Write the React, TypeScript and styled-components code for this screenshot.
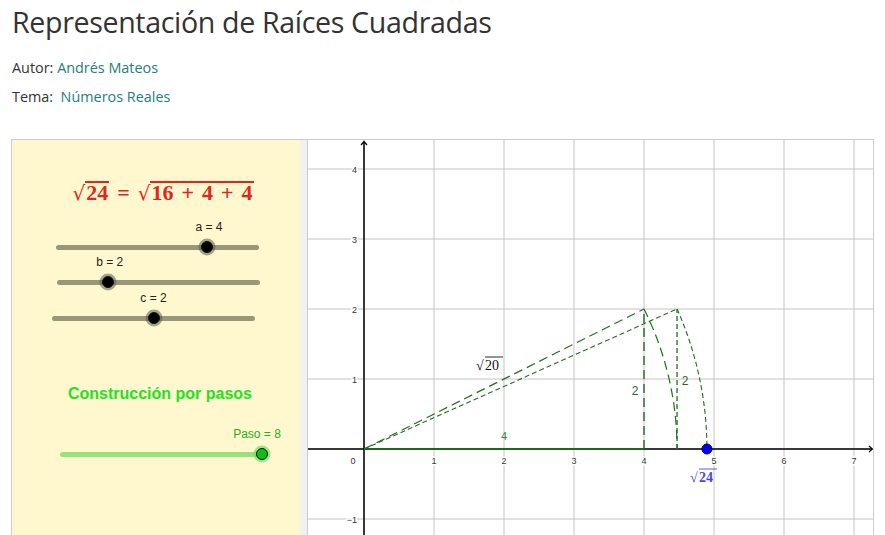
import React from "react"
import styled, { createGlobalStyle } from "styled-components"

const GlobalStyle = createGlobalStyle`
  body {
    margin: 0;
    background: #ffffff;
    font-family: "Open Sans", "Liberation Sans", sans-serif;
    color: #333333;
  }
`

const Page = styled.div`
  padding-left: 11px;
  width: 874px;
  height: 535px;
  overflow: hidden;
`

const Title = styled.h1`
  margin: 0 0 0 1px;
  font-family: "Open Sans", sans-serif;
  font-weight: 400;
  font-size: 28.6px;
  line-height: 44px;
  color: #333333;
  letter-spacing: -0.35px;
`

const MetaRow = styled.div<{ $gap: number }>`
  margin: ${(p) => p.$gap}px 0 0 1px;
  font-size: 14.4px;
  line-height: 20px;
  color: #333333;
`

const MetaLink = styled.a`
  color: #267d7d;
  text-decoration: none;
`

const Frame = styled.div`
  display: flex;
  margin-top: 32px;
  width: 861px;
  height: 400px;
  border: 1px solid #cccccc;
`

const LeftPanel = styled.div`
  width: 288px;
  background: #fff8cf;
  display: flex;
  flex-direction: column;
  font-family: "Liberation Sans", Arial, sans-serif;
`

const Separator = styled.div`
  width: 7px;
  background: #f1f1f1;
  border-right: 1px solid #cccccc;
`

const GraphView = styled.div`
  width: 565px;
  background: #ffffff;
`

const Formula = styled.div`
  margin-top: 41px;
  padding-left: 14px;
  text-align: center;
  height: 24px;
  font-family: "Liberation Serif", "Times New Roman", serif;
  font-weight: bold;
  font-size: 22px;
  line-height: 24px;
  color: #e0271f;
  white-space: nowrap;
`

const Radical = styled.span`
  font-family: "DejaVu Serif", serif;
  font-weight: normal;
  font-size: 20px;
`

const Radicand = styled.span`
  display: inline-block;
  border-top: 2px solid #e0271f;
  line-height: 20px;
  padding: 0 1px;
`

const Op = styled.span<{ $space: number }>`
  margin: 0 ${(p) => p.$space}px;
`

const SliderRow = styled.div<{ $left: number; $width: number; $top: number }>`
  position: relative;
  margin: ${(p) => p.$top}px 0 0 ${(p) => p.$left}px;
  width: ${(p) => p.$width}px;
  height: 35px;
`

const SliderLabel = styled.div<{ $color: string }>`
  position: absolute;
  top: 0;
  transform: translateX(-50%);
  font-size: 12px;
  line-height: 14px;
  color: ${(p) => p.$color};
  white-space: nowrap;
`

const TrackWrap = styled.div`
  position: relative;
  margin-top: 19px;
  height: 16px;
  display: flex;
  align-items: center;
`

const Track = styled.div<{ $color: string }>`
  width: 100%;
  height: 5px;
  border-radius: 3px;
  background: ${(p) => p.$color};
`

const Knob = styled.div<{ $fill: string; $halo: string }>`
  position: absolute;
  top: 50%;
  width: 12px;
  height: 12px;
  border-radius: 50%;
  background: ${(p) => p.$fill};
  border: 1px solid #111;
  box-sizing: border-box;
  transform: translate(-50%, -50%);
  box-shadow: 0 0 0 2.5px ${(p) => p.$halo};
`

const StepsHeading = styled.div`
  margin-top: 58px;
  padding-left: 28px;
  text-align: center;
  font-size: 16px;
  font-weight: bold;
  line-height: 20px;
  color: #22e222;
  width: 240px;
`

type SliderProps = {
  label: string
  value: number
  left: number
  width: number
  top: number
  labelShift: number
  track: string
  fill: string
  halo: string
  labelColor: string
}

function Slider(p: SliderProps) {
  return (
    <SliderRow $left={p.left} $width={p.width} $top={p.top}>
      <SliderLabel $color={p.labelColor} style={{ left: p.value * p.width + p.labelShift }}>
        {p.label}
      </SliderLabel>
      <TrackWrap>
        <Track $color={p.track} />
        <Knob $fill={p.fill} $halo={p.halo} style={{ left: p.value * p.width }} />
      </TrackWrap>
    </SliderRow>
  )
}

// graph coordinates: origin at page (364, 449), 70px per unit
const OX = 364
const OY = 449
const U = 70
const px = (x: number) => OX + x * U
const py = (y: number) => OY - y * U

const GREEN = "#1f6f1f"

function Graph() {
  const xs = [0, 1, 2, 3, 4, 5, 6, 7]
  const ys = [-1, 0, 1, 2, 3, 4]
  const r20 = Math.sqrt(20)
  const r24 = Math.sqrt(24)
  const label = { fontFamily: "Liberation Sans, Arial, sans-serif", fontSize: 9, fill: "#333", stroke: "#fff", strokeWidth: 3, paintOrder: "stroke" as const }
  return (
    <svg width={565} height={400} viewBox="308 140 565 400" style={{ display: "block" }}>
      {xs.map((x) => (
        <line key={"gx" + x} x1={px(x)} y1={140} x2={px(x)} y2={540} stroke="#c4c4c4" strokeWidth={1} />
      ))}
      {ys.map((y) => (
        <line key={"gy" + y} x1={308} y1={py(y)} x2={873} y2={py(y)} stroke="#c4c4c4" strokeWidth={1} />
      ))}

      {/* axis numbers */}
      {xs.slice(1).map((x) => (
        <text key={"lx" + x} x={px(x)} y={464} textAnchor="middle" {...label}>
          {x}
        </text>
      ))}
      <text x={353} y={464} textAnchor="middle" {...label}>0</text>
      {ys.filter((y) => y !== 0).map((y) => (
        <text key={"ly" + y} x={357} y={py(y) + 3.5} textAnchor="end" {...label}>
          {y < 0 ? "\u2212" + Math.abs(y) : y}
        </text>
      ))}

      {/* axes */}
      <line x1={308} y1={OY} x2={872} y2={OY} stroke="#000" strokeWidth={1.5} />
      <path d="M869 446 L872.5 449 L869 452" fill="none" stroke="#000" strokeWidth={1.2} />
      <line x1={OX} y1={540} x2={OX} y2={142} stroke="#000" strokeWidth={1.5} />
      <path d="M361 145 L364 141.5 L367 145" fill="none" stroke="#000" strokeWidth={1.2} />

      {/* construction */}
      <line x1={OX} y1={OY} x2={px(4)} y2={OY} stroke="#1a6a1a" strokeWidth={1.8} />
      <line x1={OX} y1={OY} x2={px(4)} y2={py(2)} stroke={GREEN} strokeWidth={1.2} strokeDasharray="9 5" />
      <line x1={OX} y1={OY} x2={px(r20)} y2={py(2)} stroke={GREEN} strokeWidth={1.1} strokeDasharray="5 3" />
      <line x1={px(4)} y1={OY} x2={px(4)} y2={py(2)} stroke={GREEN} strokeWidth={1.4} strokeDasharray="9 5" />
      <line x1={px(r20)} y1={OY} x2={px(r20)} y2={py(2)} stroke={GREEN} strokeWidth={1.3} strokeDasharray="5 3" />
      <path
        d={`M${px(4)} ${py(2)} A${r20 * U} ${r20 * U} 0 0 1 ${px(r20)} ${OY}`}
        fill="none"
        stroke={GREEN}
        strokeWidth={1.2}
        strokeDasharray="9 5"
      />
      <path
        d={`M${px(r20)} ${py(2)} A${r24 * U} ${r24 * U} 0 0 1 ${px(r24)} ${OY}`}
        fill="none"
        stroke={GREEN}
        strokeWidth={1.1}
        strokeDasharray="5 3"
      />

      <text x={504} y={440} textAnchor="middle" fontFamily="Liberation Sans, Arial, sans-serif" fontSize={11} fill="#2e8b2e">4</text>
      <text x={635} y={395} textAnchor="middle" fontFamily="Liberation Sans, Arial, sans-serif" fontSize={12} fill="#1f6f1f">2</text>
      <text x={685} y={385} textAnchor="middle" fontFamily="Liberation Sans, Arial, sans-serif" fontSize={12} fill="#1f6f1f">2</text>

      {/* sqrt 20 label */}
      <text x={476} y={370} fontFamily="Liberation Serif, serif" fontSize={14} fill="#111">{"\u221A"}</text>
      <text x={485} y={370} fontFamily="Liberation Serif, serif" fontSize={14} fill="#111">20</text>
      <line x1={485} y1={357} x2={503} y2={357} stroke="#111" strokeWidth={0.9} />

      {/* sqrt 24 label */}
      <text x={690} y={482} fontFamily="Liberation Serif, serif" fontSize={14} fill="#4a4ad0">{"\u221A"}</text>
      <text x={699} y={482} fontFamily="Liberation Serif, serif" fontSize={14} fontWeight="bold" fill="#4a4ad0">24</text>
      <line x1={699} y1={469} x2={717} y2={469} stroke="#4a4ad0" strokeWidth={0.9} />

      <circle cx={px(r24)} cy={OY} r={5} fill="#0000ee" stroke="#00007a" strokeWidth={1} />
    </svg>
  )
}

export default function App() {
  return (
    <>
      <GlobalStyle />
      <Page>
        <Title>Representación de Raíces Cuadradas</Title>
        <MetaRow $gap={14}>
          Autor: <MetaLink href="#">Andrés Mateos</MetaLink>
        </MetaRow>
        <MetaRow $gap={9}>
          Tema:&nbsp; <MetaLink href="#">Números Reales</MetaLink>
        </MetaRow>

        <Frame>
          <LeftPanel>
            <Formula>
              <Radical>√</Radical>
              <Radicand>24</Radicand>
              <Op $space={8}>=</Op>
              <Radical>√</Radical>
              <Radicand>
                16<Op $space={8}>+</Op>4<Op $space={8}>+</Op>4
              </Radicand>
            </Formula>
            <Slider label="a = 4" value={0.744} left={44} width={203} top={15} labelShift={2} track="#9a9678" fill="#000" halo="rgba(90,90,80,0.55)" labelColor="#222" />
            <Slider label="b = 2" value={0.25} left={45} width={203} top={0} labelShift={2} track="#9a9678" fill="#000" halo="rgba(90,90,80,0.55)" labelColor="#222" />
            <Slider label="c = 2" value={0.5} left={40} width={203} top={1} labelShift={0} track="#9a9678" fill="#000" halo="rgba(90,90,80,0.55)" labelColor="#222" />
            <StepsHeading>Construcción por pasos</StepsHeading>
            <Slider label="Paso = 8" value={1} left={48} width={202} top={23} labelShift={-5} track="#98e27c" fill="#10c010" halo="rgba(120,220,100,0.7)" labelColor="#22b022" />
          </LeftPanel>
          <Separator />
          <GraphView>
            <Graph />
          </GraphView>
        </Frame>
      </Page>
    </>
  )
}
